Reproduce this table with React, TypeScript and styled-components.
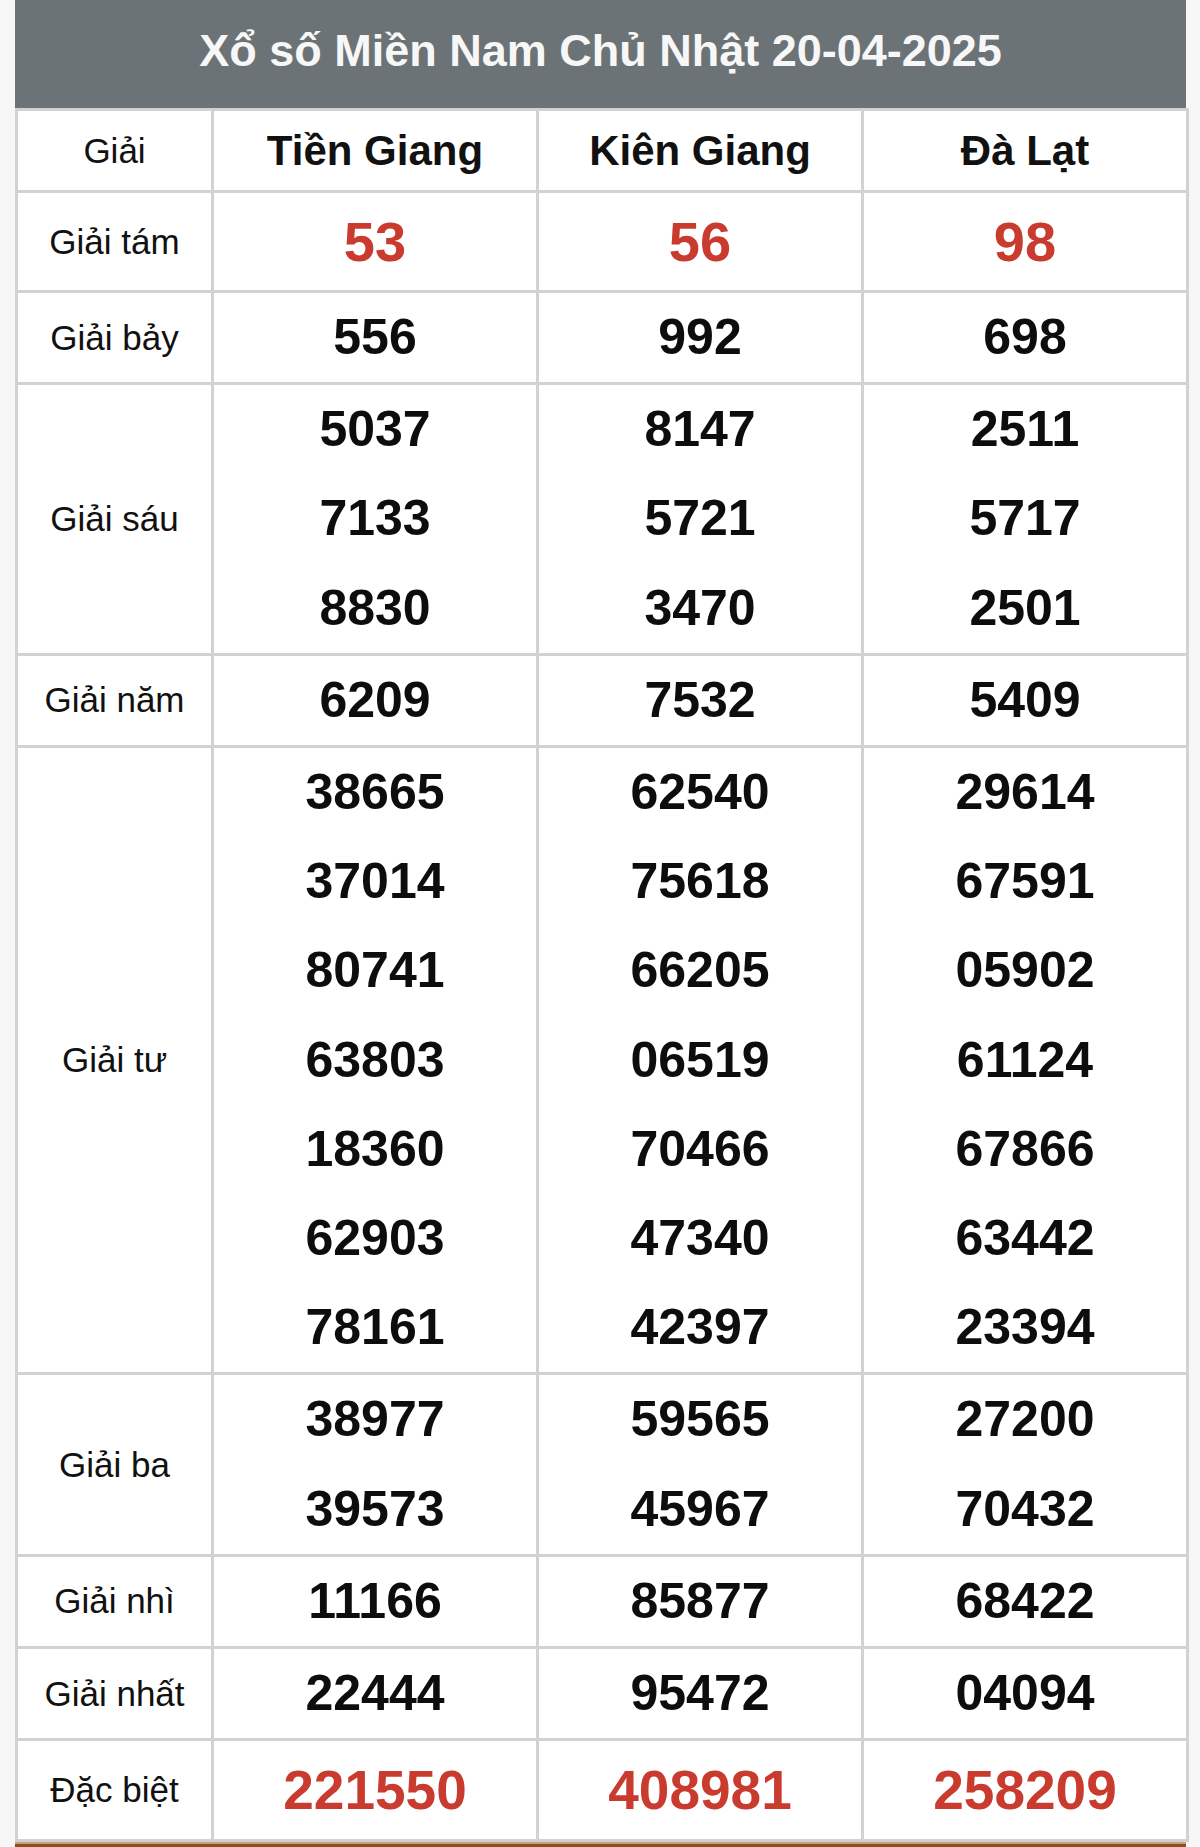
import styled, { createGlobalStyle } from 'styled-components'

type Prize = {
  label: string
  values: string[][]
  highlight?: boolean
  big?: boolean
}

const provinces = ['Tiền Giang', 'Kiên Giang', 'Đà Lạt']

const prizes: Prize[] = [
  { label: 'Giải tám', values: [['53'], ['56'], ['98']], highlight: true },
  { label: 'Giải bảy', values: [['556'], ['992'], ['698']] },
  {
    label: 'Giải sáu',
    values: [
      ['5037', '7133', '8830'],
      ['8147', '5721', '3470'],
      ['2511', '5717', '2501'],
    ],
  },
  { label: 'Giải năm', values: [['6209'], ['7532'], ['5409']] },
  {
    label: 'Giải tư',
    values: [
      ['38665', '37014', '80741', '63803', '18360', '62903', '78161'],
      ['62540', '75618', '66205', '06519', '70466', '47340', '42397'],
      ['29614', '67591', '05902', '61124', '67866', '63442', '23394'],
    ],
  },
  {
    label: 'Giải ba',
    values: [
      ['38977', '39573'],
      ['59565', '45967'],
      ['27200', '70432'],
    ],
  },
  { label: 'Giải nhì', values: [['11166'], ['85877'], ['68422']] },
  { label: 'Giải nhất', values: [['22444'], ['95472'], ['04094']] },
  { label: 'Đặc biệt', values: [['221550'], ['408981'], ['258209']], highlight: true, big: true },
]

export default function App() {
  return (
    <>
      <GlobalStyle />
      <Page>
        <Board>
          <Title>Xổ số Miền Nam Chủ Nhật 20-04-2025</Title>
          <ResultTable>
            <colgroup>
              <col style={{ width: 196 }} />
              <col style={{ width: 325 }} />
              <col style={{ width: 325 }} />
              <col style={{ width: 325 }} />
            </colgroup>
            <thead>
              <tr>
                <LabelHead>Giải</LabelHead>
                {provinces.map((p) => (
                  <ProvinceHead key={p}>{p}</ProvinceHead>
                ))}
              </tr>
            </thead>
            <tbody>
              {prizes.map((prize) => (
                <tr key={prize.label}>
                  <LabelCell>{prize.label}</LabelCell>
                  {prize.values.map((col, i) => (
                    <NumberCell key={i}>
                      {col.map((n) => (
                        <Number key={n} $red={!!prize.highlight} $big={!!prize.big}>
                          {n}
                        </Number>
                      ))}
                    </NumberCell>
                  ))}
                </tr>
              ))}
            </tbody>
          </ResultTable>
        </Board>
        <Footer />
      </Page>
    </>
  )
}

const GlobalStyle = createGlobalStyle`
  html, body {
    margin: 0;
    padding: 0;
    background: #f7f7f7;
    font-family: "Liberation Sans", Arial, sans-serif;
  }
`

const Page = styled.div`
  width: 1200px;
  min-height: 1847px;
  background: #f7f7f7;
`

const Board = styled.div`
  width: 1171px;
  margin: 0 0 0 15px;
  background: #ffffff;
`

const Title = styled.div`
  height: 108px;
  background: #6b7377;
  color: #f7f7f7;
  font-size: 45px;
  font-weight: 700;
  line-height: 102px;
  text-align: center;
`

const ResultTable = styled.table`
  width: 1171px;
  table-layout: fixed;
  border-collapse: separate;
  border-spacing: 0;
  border-left: 3px solid #d2d2d2;
  box-sizing: border-box;
  background: #ffffff;
  td,
  th {
    border-right: 3px solid #d2d2d2;
    border-bottom: 3px solid #d2d2d2;
    padding: 0;
    text-align: center;
    vertical-align: middle;
  }
  th {
    border-top: 3px solid #d2d2d2;
  }
`

const LabelHead = styled.th`
  height: 79px;
  font-size: 35px;
  font-weight: 400;
  color: #111;
`

const ProvinceHead = styled.th`
  height: 79px;
  font-size: 42px;
  font-weight: 700;
  color: #111;
`

const LabelCell = styled.td`
  font-size: 35px;
  color: #111;
`

const NumberCell = styled.td``

const Number = styled.div<{ $red: boolean; $big: boolean }>`
  font-size: ${(p) => (p.$big ? '55px' : p.$red ? '56px' : '50px')};
  font-weight: 700;
  line-height: ${(p) => (p.$big ? '98px' : p.$red ? '97px' : '89.2px')};
  color: ${(p) => (p.$red ? '#c93b2f' : '#0d0d0d')};
`

const Footer = styled.div`
  width: 1171px;
  margin: 0 0 0 15px;
  height: 6px;
  background: #8a4f1e;
  border-top: 2px solid #c8a27c;
`
